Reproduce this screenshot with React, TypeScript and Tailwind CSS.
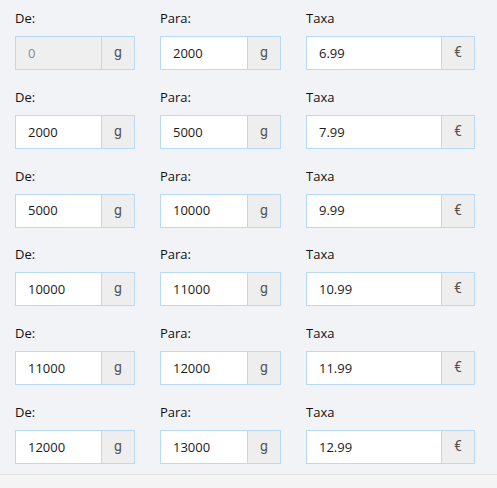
import React from 'react';

const rows = [
  { from: '0', to: '2000', fee: '6.99', locked: true },
  { from: '2000', to: '5000', fee: '7.99' },
  { from: '5000', to: '10000', fee: '9.99' },
  { from: '10000', to: '11000', fee: '10.99' },
  { from: '11000', to: '12000', fee: '11.99' },
  { from: '12000', to: '13000', fee: '12.99' },
];

function Field({ label, value, unit, width, disabled }: { label: string; value: string; unit: string; width: string; disabled?: boolean }) {
  return (
    <div className={width}>
      <div className="h-[18px] text-[13px] leading-[18px] text-[#111]">{label}</div>
      <div className="mt-[9px] flex h-[34px]">
        <div
          className={`flex flex-1 items-center border border-[#b7daf7] pl-[12px] pt-px text-[13px] ${
            disabled ? 'bg-[#efefef] text-[#8a8a8a]' : 'bg-white text-[#1a1a1a]'
          }`}
        >
          {value}
        </div>
        <div className="flex w-[33px] items-center justify-center border border-l-0 border-[#b7daf7] bg-[#eeeeee] pb-px font-['Roboto',sans-serif] text-[14px] text-[#555]">
          {unit}
        </div>
      </div>
    </div>
  );
}

export default function App() {
  return (
    <div className="h-[488px] w-[497px] overflow-hidden bg-[#f4f4f5]" style={{ fontFamily: '"Open Sans", "Noto Sans", sans-serif' }}>
      <div className="border-b border-[#e3e3e6] bg-[#f2f3f7] pl-[15px] pt-[9px] pb-[10px]">
        {rows.map((r, i) => (
          <div key={i} className={`flex gap-[25px] ${i < rows.length - 1 ? 'h-[78.8px]' : ''}`}>
            <Field label="De:" value={r.from} unit="g" width="w-[120px]" disabled={r.locked} />
            <Field label="Para:" value={r.to} unit="g" width="w-[121px]" />
            <Field label="Taxa" value={r.fee} unit="€" width="w-[169px]" />
          </div>
        ))}
      </div>
    </div>
  );
}
